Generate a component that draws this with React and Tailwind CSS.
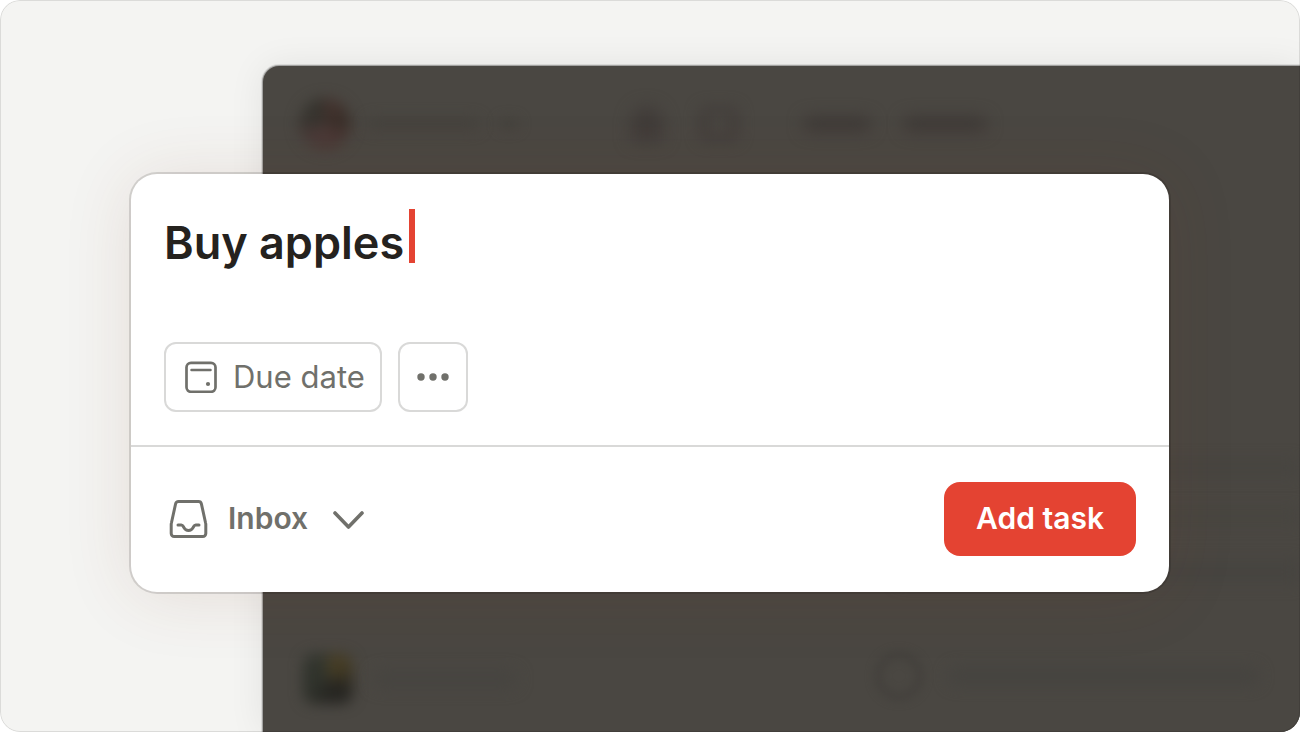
import { useState } from "react";

function CalendarIcon() {
  return (
    <svg width="32" height="32" viewBox="0 0 32 32" fill="none" stroke="currentColor" aria-hidden="true">
      <rect x="1.5" y="1.8" width="29" height="29" rx="4.5" strokeWidth="2.7" />
      <path d="M6.5 9h19" strokeWidth="2.5" strokeLinecap="round" />
      <circle cx="23" cy="23" r="2.1" fill="currentColor" stroke="none" />
    </svg>
  );
}

function InboxIcon() {
  return (
    <svg width="40" height="40" viewBox="0 0 40 40" fill="none" stroke="currentColor" strokeWidth="3" strokeLinecap="round" strokeLinejoin="round" aria-hidden="true">
      <path d="M10.5 2.5h20a3 3 0 0 1 2.9 2.3l4.2 19.2q.2.8.2 1.6v8.9a3 3 0 0 1-3 3h-28.600a3 3 0 0 1-3-3v-8.900q0-.8.2-1.600L7.600 4.800a3 3 0 0 1 2.900-2.300z" />
      <path d="M10 26h3.300c1.600 0 1.800 1.200 2.600 2.600 1 1.900 2.600 2.900 4.600 2.900s3.600-1 4.600-2.900c.8-1.400 1-2.600 2.600-2.600H31" />
    </svg>
  );
}

function ChevronIcon() {
  return (
    <svg width="32" height="20" viewBox="0 0 32 20" fill="none" stroke="currentColor" strokeWidth="3.6" strokeLinecap="round" strokeLinejoin="round" aria-hidden="true">
      <path d="M3 4l13.500 14L30 4" />
    </svg>
  );
}

function DotsIcon() {
  return (
    <svg width="32" height="8" viewBox="0 0 32 8" fill="currentColor" aria-hidden="true">
      <circle cx="4" cy="4" r="3.7" />
      <circle cx="16" cy="4" r="3.7" />
      <circle cx="28" cy="4" r="3.7" />
    </svg>
  );
}

// Dimmed, out-of-focus app window behind the dialog
function AppWindow() {
  return (
    <div
      aria-hidden="true"
      className="col-start-1 row-start-1 ml-[263px] mt-[66px] flex overflow-hidden rounded-tl-2xl bg-[#4a4742] shadow-[0_0_0_1px_rgba(0,0,0,0.25),0_0_0_2px_rgba(0,0,0,0.08),0_0_36px_rgba(0,0,0,0.08)]"
    >
      <div className="flex w-[508px] shrink-0 flex-col justify-between pb-7 pl-9 pr-8 pt-8">
        <div className="flex items-center">
          <div className="size-[52px] rounded-full bg-[conic-gradient(#493430,#382e28,#4a3835,#4b3a38,#383530,#33312b)] blur-[7px]" />
          <div className="ml-4 h-3 w-[112px] rounded-full bg-[#45423d] blur-[7px]" />
          <div className="ml-5 h-3 w-5 rounded-full bg-[#45423d] blur-[6px]" />
          <div className="ml-auto h-9 w-8 rounded-t-full bg-[#413c39] blur-[8px]" />
          <div className="ml-9 h-9 w-10 rounded-lg border-[9px] border-[#433e3b] blur-[7px]" />
        </div>
        <div className="flex items-center">
          <div className="ml-1 size-[50px] rounded-xl bg-[conic-gradient(#4a3f24,#423a24,#262521,#272622,#2f322b,#30332c,#34372f)] blur-[7px]" />
          <div className="ml-5 h-4 w-[144px] rounded-full bg-[#464440] blur-[8px]" />
        </div>
      </div>
      <div className="flex flex-1 flex-col justify-between bg-[#4a4742] pb-8 pt-[50px]">
        <div className="flex gap-8 pl-8">
          <div className="h-4 w-[68px] rounded-full bg-[#3f3a37] blur-[8px]" />
          <div className="h-4 w-[84px] rounded-full bg-[#3f3a37] blur-[8px]" />
        </div>
        <div>
          <div className="ml-32 h-3 bg-[#464440] blur-[8px]" />
          <div className="ml-32 mt-9 h-3 bg-[#474540] blur-[8px]" />
          <div className="ml-32 mt-10 h-5 bg-[#464440] blur-[8px]" />
          <div className="mt-[70px] flex items-center pl-[104px] pr-10">
            <div className="size-12 rounded-full border-[6px] border-[#423f3b] blur-[5px]" />
            <div className="ml-6 h-5 flex-1 rounded-full bg-[#464440] blur-[7px]" />
          </div>
        </div>
      </div>
    </div>
  );
}

export default function App() {
  const [task, setTask] = useState("Buy apples");
  const [project, setProject] = useState("Inbox");

  return (
    <main className="h-screen bg-white pb-px font-['Inter',sans-serif]">
      <div className="relative grid h-full grid-cols-1 grid-rows-1 overflow-hidden rounded-[20px] bg-[#f4f4f2]">
        <AppWindow />
        <form
          onSubmit={(e) => e.preventDefault()}
          className="z-10 col-start-1 row-start-1 mb-[140px] ml-[131px] mr-[131px] mt-[174px] flex flex-col self-start rounded-[26px] bg-white shadow-[0_0_0_2px_rgba(0,0,0,0.13),0_4px_70px_rgba(120,60,30,0.12)]"
        >
          <div className="border-b-2 border-[#d9d9d8] px-[33px] pb-[33px] pt-[34px]">
            <div className="flex">
              <input
                type="text"
                aria-label="Task name"
                value={task}
                onChange={(e) => setTask(e.target.value)}
                className="field-sizing-content h-[68px] text-[45px] font-semibold text-[#25221e] caret-transparent outline-none"
              />
              <span className="ml-[5px] mt-px h-[54px] w-[6px] bg-[#e44332]" />
            </div>
            <div className="mt-[66px] flex gap-4">
              <button
                type="button"
                className="flex h-[70px] items-center gap-4 rounded-xl border-2 border-[#d9d9d8] pl-[19px] pr-[15px] text-[31px] text-[#70706b]"
              >
                <CalendarIcon />
                Due date
              </button>
              <button
                type="button"
                aria-label="More actions"
                className="flex size-[70px] items-center justify-center rounded-xl border-2 border-[#d9d9d8] text-[#70706b]"
              >
                <DotsIcon />
              </button>
            </div>
          </div>
          <div className="flex items-center justify-between px-[33px] pb-9 pt-[35px]">
            <label className="flex items-center pl-1 text-[#70706b]">
              <InboxIcon />
              <select
                aria-label="Project"
                value={project}
                onChange={(e) => setProject(e.target.value)}
                className="field-sizing-content ml-5 mr-6 appearance-none pb-0.5 text-[30px] font-semibold outline-none"
              >
                <option>Inbox</option>
              </select>
              <ChevronIcon />
            </label>
            <button
              type="submit"
              className="h-[74px] rounded-2xl bg-[#e44332] px-8 pb-0.5 text-[30px] font-semibold text-white"
            >
              Add task
            </button>
          </div>
        </form>
        <div className="pointer-events-none absolute inset-0 rounded-[20px] border border-black/10" />
      </div>
    </main>
  );
}
